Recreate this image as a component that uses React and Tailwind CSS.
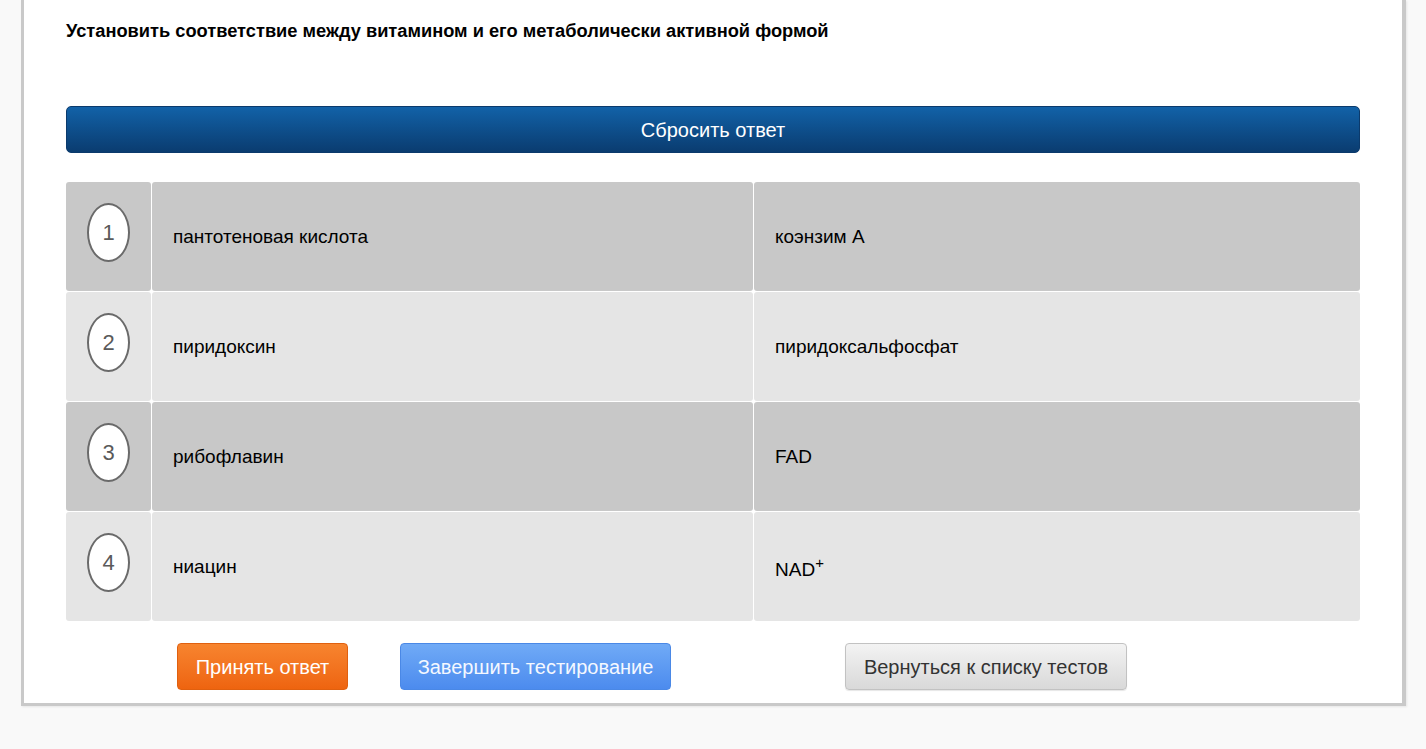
import React from 'react';

const rows = [
  { n: 1, left: 'пантотеновая кислота', right: 'коэнзим A' },
  { n: 2, left: 'пиридоксин', right: 'пиридоксальфосфат' },
  { n: 3, left: 'рибофлавин', right: 'FAD' },
  { n: 4, left: 'ниацин', right: 'NAD', sup: '+' },
];

const App = () => {
  return (
    <div className="min-h-[749px] bg-[#f9f9f9] font-['Liberation_Sans',Arial,sans-serif]">
      <div className="ml-[21px] w-[1385px] bg-white border-l-[3px] border-r-[4px] border-b-[3px] border-[#c9c9c9] px-[42px] pt-[20px] pb-[13px] shadow-[1px_1px_2px_rgba(0,0,0,0.08)]">
        <h1 className="text-[18.25px] leading-[22px] font-bold text-black">
          Установить соответствие между витамином и его метаболически активной формой
        </h1>

        <button className="mt-[64px] w-full h-[47px] rounded-[5px] border border-[#0b3a6c] bg-gradient-to-b from-[#1262a8] to-[#0a3c70] text-white text-[20px]">
          Сбросить ответ
        </button>

        <div className="mt-[29px] flex flex-col gap-[1px]">
          {rows.map((r) => {
            const bg = r.n % 2 === 1 ? 'bg-[#c8c8c8]' : 'bg-[#e5e5e5]';
            return (
              <div key={r.n} className="grid grid-cols-[85px_601px_1fr] gap-[1px] h-[109px]">
                <div className={`${bg} rounded-[3px] flex justify-center pt-[21px]`}>
                  <div className="w-[43px] h-[59px] rounded-[50%] border-2 border-[#6a6a6a] bg-white flex items-center justify-center text-[22px] text-[#5a5a5a]">
                    {r.n}
                  </div>
                </div>
                <div className={`${bg} rounded-[3px] flex items-center pl-[21px] pt-[2px] text-[19px] text-black`}>
                  {r.left}
                </div>
                <div className={`${bg} rounded-[3px] flex items-center pl-[21px] ${r.sup ? 'pt-[8px]' : 'pt-[2px]'} text-[19px] text-black`}>
                  {r.right}
                  {r.sup && <sup className="text-[15px] relative -top-[8px]">{r.sup}</sup>}
                </div>
              </div>
            );
          })}
        </div>

        <div className="mt-[22px] flex">
          <button className="ml-[111px] w-[171px] h-[47px] rounded-[4px] border border-[#e0600f] bg-gradient-to-b from-[#f7842e] to-[#ee640f] text-white text-[20px]">
            Принять ответ
          </button>
          <button className="ml-[52px] w-[271px] h-[47px] rounded-[4px] border border-[#4a88e6] bg-gradient-to-b from-[#70aaf6] to-[#4c8bee] text-[#f4f8ff] text-[20px]">
            Завершить тестирование
          </button>
          <button className="ml-[174px] w-[282px] h-[47px] rounded-[4px] border border-[#c2c2c2] bg-gradient-to-b from-[#f3f3f3] to-[#d9d9d9] text-[#333] text-[20px] shadow-[0_1px_1px_rgba(0,0,0,0.1)]">
            Вернуться к списку тестов
          </button>
        </div>
      </div>
    </div>
  );
};

export default App;
